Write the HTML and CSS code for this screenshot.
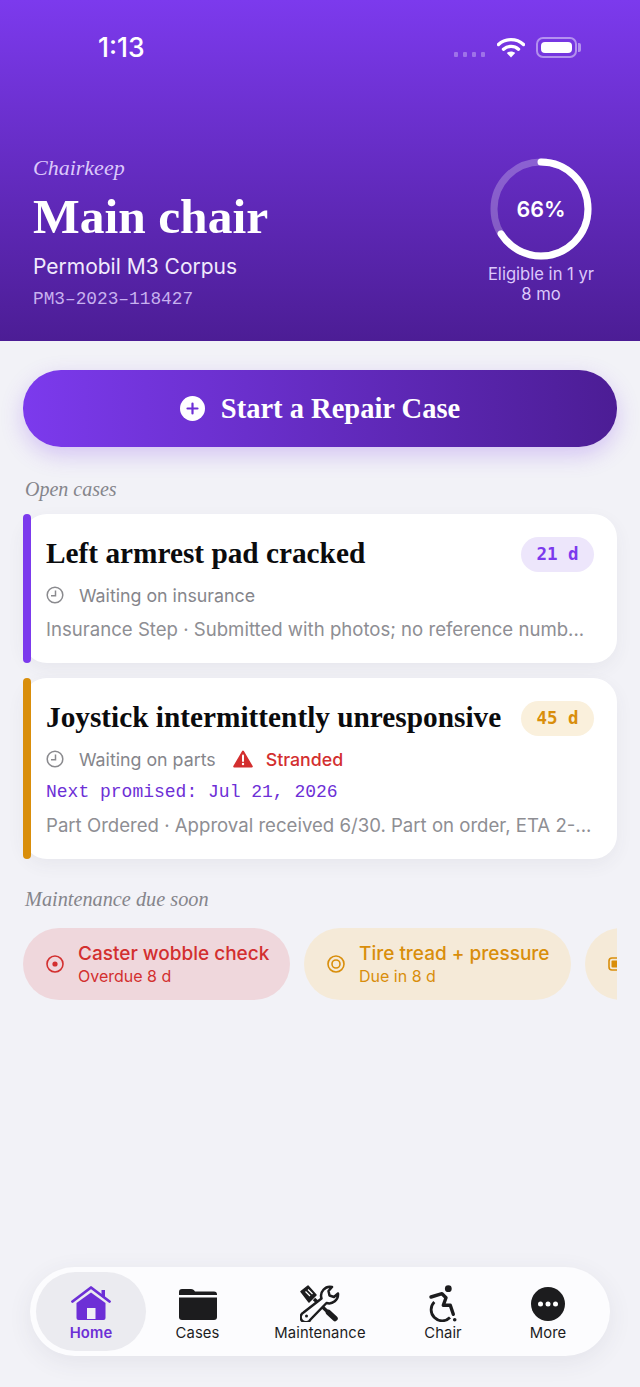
FILE: index.html
```html
<!doctype html>
<html>
<head>
<title>Chairkeep</title>
<meta charset="utf-8" />
<meta name="viewport" content="width=device-width, initial-scale=1" />
<link rel="stylesheet" href="styles.css">
</head>
<body>
<div class="app">

<header class="hero">
  <div class="status">
    <span class="time">1:13</span>
    <div class="status-icons">
      <span class="dots"><i></i><i></i><i></i><i></i></span>
      <svg class="wifi" width="28" height="21" viewBox="0 0 28 21">
        <path d="M1.5 7.5C8.5 1 19.500 1 26.500 7.500" fill="none" stroke="#fff" stroke-width="3.400" stroke-linecap="round"/>
        <path d="M6.500 12.200C10.800 8.400 17.200 8.400 21.500 12.200" fill="none" stroke="#fff" stroke-width="3.400" stroke-linecap="round"/>
        <path d="M14 20.500L9.800 16C12.200 14 15.800 14 18.200 16Z" fill="#fff"/>
      </svg>
      <span class="battery"><i></i></span>
    </div>
  </div>
  <div class="hero-body">
    <div class="hero-text">
      <div class="brand">Chairkeep</div>
      <h1>Main chair</h1>
      <div class="model">Permobil M3 Corpus</div>
      <div class="serial">PM3–2023–118427</div>
    </div>
    <div class="eligible">
      <div class="ring">
        <svg width="102" height="102" viewBox="0 0 102 102">
          <circle cx="51" cy="51" r="47" fill="none" stroke="#fff" stroke-opacity="0.25" stroke-width="7"/>
          <circle cx="51" cy="51" r="47" fill="none" stroke="#fff" stroke-width="7" stroke-linecap="round" stroke-dasharray="195 295.300" transform="rotate(-90 51 51)"/>
        </svg>
        <span class="pct">66%</span>
      </div>
      <div class="eligible-label">Eligible in 1 yr<br>8 mo</div>
    </div>
  </div>
</header>

<main class="content">
  <button class="repair" type="button">
    <svg width="25" height="25" viewBox="0 0 25 25">
      <circle cx="12.500" cy="12.500" r="12.500" fill="#fff"/>
      <path d="M12.500 7.500v10M7.500 12.500h10" stroke="#6d2fd6" stroke-width="2.200" stroke-linecap="round"/>
    </svg>
    Start a Repair Case
  </button>

  <h2 class="section first">Open cases</h2>

  <article class="case purple">
    <div class="case-top">
      <h3>Left armrest pad cracked</h3>
      <span class="days">21 d</span>
    </div>
    <div class="case-status">
      <svg class="clock" width="18" height="18" viewBox="0 0 18 18"><circle cx="9" cy="9" r="7.800" fill="none" stroke="#8a8a8e" stroke-width="1.500"/><path d="M9.500 4.500V9.800H5" fill="none" stroke="#8a8a8e" stroke-width="1.500"/></svg>
      <span>Waiting on insurance</span>
    </div>
    <p class="note">Insurance Step · Submitted with photos; no reference numb...</p>
  </article>

  <article class="case amber">
    <div class="case-top">
      <h3>Joystick intermittently unresponsive</h3>
      <span class="days">45 d</span>
    </div>
    <div class="case-status">
      <svg class="clock" width="18" height="18" viewBox="0 0 18 18"><circle cx="9" cy="9" r="7.800" fill="none" stroke="#8a8a8e" stroke-width="1.500"/><path d="M9.500 4.500V9.800H5" fill="none" stroke="#8a8a8e" stroke-width="1.500"/></svg>
      <span>Waiting on parts</span>
      <svg class="warn" width="20" height="18" viewBox="0 0 20 18"><path d="M10 1.500L18.800 16.500H1.200Z" fill="#d32f2f" stroke="#d32f2f" stroke-width="2" stroke-linejoin="round"/><path d="M10 5.500V11" stroke="#fff" stroke-width="2" stroke-linecap="round"/><circle cx="10" cy="14" r="1.200" fill="#fff"/></svg>
      <span class="stranded">Stranded</span>
    </div>
    <div class="promised">Next promised: Jul 21, 2026</div>
    <p class="note">Part Ordered · Approval received 6/30. Part on order, ETA 2-...</p>
  </article>

  <h2 class="section">Maintenance due soon</h2>

  <div class="chips">
    <div class="chip red">
      <svg width="18" height="18" viewBox="0 0 18 18"><circle cx="9" cy="9" r="8" fill="none" stroke="#d32f2f" stroke-width="1.600"/><circle cx="9" cy="9" r="2.600" fill="#d32f2f"/></svg>
      <div><div class="chip-title">Caster wobble check</div><div class="chip-sub">Overdue 8 d</div></div>
    </div>
    <div class="chip yellow">
      <svg width="18" height="18" viewBox="0 0 18 18"><circle cx="9" cy="9" r="8" fill="none" stroke="#d98e0b" stroke-width="1.600"/><circle cx="9" cy="9" r="4" fill="none" stroke="#d98e0b" stroke-width="1.600"/></svg>
      <div><div class="chip-title">Tire tread + pressure</div><div class="chip-sub">Due in 8 d</div></div>
    </div>
    <div class="chip yellow">
      <svg width="18" height="18" viewBox="0 0 18 18"><rect x="1" y="3" width="16" height="12" rx="3" fill="none" stroke="#d98e0b" stroke-width="1.600"/><rect x="3.500" y="5.500" width="11" height="7" rx="1" fill="#d98e0b"/></svg>
    </div>
  </div>
</main>

<nav class="tabs">
  <a class="tab active">
    <svg width="40" height="36" viewBox="0 0 40 36">
      <path d="M1.500 15.500L20 1.500 38.500 15.500" fill="none" stroke="#6d2fd6" stroke-width="2.800" stroke-linecap="round" stroke-linejoin="round"/>
      <path d="M30.500 4h3.500v9l-3.500-2.700Z" fill="#6d2fd6"/>
      <path d="M5.500 17L20 6.500 34.500 17V32a2 2 0 0 1-2 2H7.500a2 2 0 0 1-2-2Z" fill="#6d2fd6"/>
      <rect x="16" y="22" width="8.500" height="11" fill="#f0f0f5"/>
    </svg>
    <span>Home</span>
  </a>
  <a class="tab cases">
    <svg width="40" height="36" viewBox="0 0 40 36">
      <path d="M1 6a3 3 0 0 1 3-3h9c2 0 3 1 4 2.500h19a3 3 0 0 1 3 3V9H1Z" fill="#1c1c1e"/>
      <path d="M1 11.500h38V31a3 3 0 0 1-3 3H4a3 3 0 0 1-3-3Z" fill="#1c1c1e"/>
    </svg>
    <span>Cases</span>
  </a>
  <a class="tab maint">
    <svg width="40" height="37" viewBox="0 0 40 37">
      <path d="M1 6.500L8 1 16 10 9 17Z" fill="#1c1c1e" stroke="#1c1c1e" stroke-width="1.500" stroke-linejoin="round"/>
      <path d="M5.500 6.500L10 11M8 4.500L12.500 9" stroke="#fff" stroke-width="1.300"/>
      <path d="M14 14L30 29" stroke="#1c1c1e" stroke-width="3.400"/>
      <path d="M28.500 27.500L35 33.500" stroke="#1c1c1e" stroke-width="5.500" stroke-linecap="round"/>
      <path d="M32 2A9 9 0 0 0 21.500 13.500L3.500 27.500A5.200 5.200 0 1 0 10.500 34.500L26.500 18A9 9 0 0 0 38 8.500L34 12 29.500 10.500 28.500 6Z" fill="#fcfcfe" stroke="#1c1c1e" stroke-width="2.500" stroke-linejoin="round"/>
      <circle cx="6.500" cy="31" r="1.500" fill="#1c1c1e"/>
    </svg>
    <span>Maintenance</span>
  </a>
  <a class="tab chair">
    <svg width="40" height="37" viewBox="0 0 40 37">
      <circle cx="25.300" cy="3.700" r="3.400" fill="#1c1c1e"/>
      <path d="M8 12L19 8.700 23 12.700 20.300 20.300H27.300L30.300 29.300" fill="none" stroke="#1c1c1e" stroke-width="3.400" stroke-linejoin="round" stroke-linecap="round"/>
      <path d="M11.300 17A10.500 10.500 0 1 0 27 32.500" fill="none" stroke="#1c1c1e" stroke-width="2.800"/>
      <circle cx="31.700" cy="34.700" r="1.800" fill="#1c1c1e"/>
    </svg>
    <span>Chair</span>
  </a>
  <a class="tab more">
    <svg width="40" height="36" viewBox="0 0 40 36">
      <circle cx="20" cy="18" r="17" fill="#1c1c1e"/>
      <circle cx="12.500" cy="18" r="2.500" fill="#fff"/><circle cx="20" cy="18" r="2.500" fill="#fff"/><circle cx="27.500" cy="18" r="2.500" fill="#fff"/>
    </svg>
    <span>More</span>
  </a>
</nav>

</div>
</body>
</html>
```

FILE: styles.css
```css
* {
box-sizing: border-box;
}
body {
margin: 0;
background-color: #f2f2f7;
font-family: Inter, "Liberation Sans", sans-serif;
}
.app {
width: 640px;
height: 1387px;
overflow: hidden;
display: flex;
flex-direction: column;
}

/* header */
.hero {
height: 341px;
padding: 0 33px;
color: #fff;
background: linear-gradient(180deg, #7c3aed 0%, #4c1d95 100%);
}
.status {
height: 95px;
padding: 28px 26px 0 65px;
display: flex;
justify-content: space-between;
}
.time {
font-size: 26.500px;
font-weight: 500;
line-height: 38px;
}
.status-icons {
display: flex;
align-items: center;
height: 38px;
}
.dots {
display: flex;
gap: 5px;
margin: 14px 12px 0 0;
}
.dots i {
width: 4px;
height: 5px;
border-radius: 1px;
background-color: rgba(255,255,255,0.3);
}
.wifi {
margin-right: 11px;
}
.battery {
width: 41px;
height: 21px;
margin-right: 4px;
padding: 3px;
border: 2px solid rgba(255,255,255,0.45);
border-radius: 7px;
position: relative;
}
.battery i {
display: block;
width: 100%;
height: 100%;
border-radius: 4px;
background-color: #fff;
}
.battery::after {
content: "";
position: absolute;
right: -6px;
top: 4px;
width: 3px;
height: 9px;
border-radius: 0 2px 2px 0;
background-color: rgba(255,255,255,0.45);
}
.hero-body {
display: flex;
justify-content: space-between;
align-items: flex-start;
padding-top: 59px;
}
.brand {
font-family: "Liberation Serif", serif;
font-style: italic;
font-size: 22px;
line-height: 28px;
color: #dcc8fb;
}
h1 {
margin: 4px 0 0;
font-family: "Liberation Serif", serif;
font-weight: 700;
font-size: 49.500px;
line-height: 62px;
}
.model {
margin-top: 5px;
font-size: 21px;
line-height: 28px;
color: #f1eafd;
}
.serial {
margin-top: 6px;
font-family: "Liberation Mono", monospace;
font-size: 17.800px;
line-height: 24px;
color: #c7b1ef;
}
.eligible {
width: 120px;
margin: 4px 6px 0 0;
text-align: center;
display: flex;
flex-direction: column;
align-items: center;
}
.ring {
position: relative;
width: 102px;
height: 102px;
}
.ring svg {
display: block;
}
.pct {
position: absolute;
inset: 0;
display: flex;
align-items: center;
justify-content: center;
font-size: 21.500px;
font-weight: 600;
}
.eligible-label {
margin-top: 4px;
font-size: 16.600px;
line-height: 20px;
white-space: nowrap;
color: #dcc8fb;
}

/* main column */
.content {
flex: 1;
padding: 29px 23px 0;
min-height: 0;
}
.repair {
width: 594px;
height: 77px;
border: 0;
border-radius: 38px;
display: flex;
align-items: center;
justify-content: center;
gap: 16px;
color: #fff;
font-family: "Liberation Serif", serif;
font-weight: 700;
font-size: 28.500px;
background: linear-gradient(90deg, #7c3aed 0%, #4c1d95 100%);
box-shadow: 0 8px 22px rgba(124,58,237,0.25);
}
.section {
margin: 28px 0 13px 2px;
font-family: "Liberation Serif", serif;
font-style: italic;
font-weight: 400;
font-size: 20.300px;
line-height: 24px;
color: #85858b;
}
.section.first {
margin-top: 30px;
font-size: 20px;
}
.case {
position: relative;
margin-bottom: 15px;
padding: 22px 23px 20px 23px;
background-color: #fff;
border-radius: 24px;
box-shadow: 0 6px 18px rgba(60,60,90,0.06);
}
.case::before {
content: "";
position: absolute;
left: 0;
top: 0;
bottom: 0;
width: 8px;
border-radius: 4px;
}
.case.purple::before {
background-color: #7c3aed;
}
.case.amber::before {
background-color: #d98e0b;
}
.case-top {
display: flex;
justify-content: space-between;
align-items: center;
min-height: 36px;
}
h3 {
margin: 0;
padding-bottom: 3px;
font-family: "Liberation Serif", serif;
font-weight: 700;
font-size: 29.300px;
line-height: 32px;
color: #0b0b0d;
white-space: nowrap;
}
.days {
flex: none;
width: 73px;
height: 35px;
border-radius: 18px;
text-align: center;
font-family: "DejaVu Sans Mono", monospace;
font-weight: 700;
font-size: 17.500px;
line-height: 35px;
white-space: pre;
}
.purple .days {
background-color: #ede6fb;
color: #7c3aed;
}
.amber .days {
background-color: #faf0dc;
color: #d98e0b;
}
.case-status {
margin-top: 9px;
display: flex;
align-items: center;
height: 28px;
font-size: 17.800px;
color: #85858b;
}
.clock {
margin-right: 15px;
}
.warn {
margin: 0 13px 0 17px;
}
.stranded {
color: #d32f2f;
font-weight: 500;
}
.promised {
margin-top: 5px;
font-family: "Liberation Mono", monospace;
font-size: 18px;
line-height: 28px;
color: #6d2fd6;
}
.note {
margin: 6px 0 0;
font-size: 18.600px;
line-height: 28px;
color: #8e8e93;
white-space: nowrap;
}
.promised + .note {
margin-top: 5px;
}

/* maintenance chips */
.chips {
display: flex;
gap: 14px;
overflow: hidden;
margin-top: 17px;
}
.chip {
flex: 0 0 267px;
height: 72px;
padding: 0 20px 0 23px;
border-radius: 36px;
display: flex;
align-items: center;
gap: 14px;
}
.chip.red {
background-color: #efd7dc;
color: #d32f2f;
}
.chip.yellow {
background-color: #f5ead8;
color: #d98e0b;
}
.chip-title {
font-size: 19px;
font-weight: 500;
line-height: 24px;
white-space: nowrap;
}
.chip-sub {
font-size: 16px;
line-height: 20px;
}

/* tab bar */
.tabs {
flex: none;
width: 580px;
height: 89px;
margin: 0 30px 31px;
padding: 5px 6px;
display: flex;
background-color: #fcfcfe;
border-radius: 45px;
box-shadow: 0 6px 24px rgba(60,60,90,0.08);
}
.tab {
flex: 1 1 0;
display: flex;
flex-direction: column;
align-items: center;
justify-content: flex-end;
padding-bottom: 9px;
font-size: 14.800px;
font-weight: 400;
letter-spacing: 0.1px;
color: #1c1c1e;
}
.tab svg {
margin-bottom: 2px;
}
.tab.active {
flex: 0 0 110px;
border-radius: 40px;
background-color: #ebebf0;
color: #6d2fd6;
font-weight: 600;
}
.tab.cases {
flex: 0 0 103px;
}
.tab.maint {
flex: 0 0 142px;
}
.tab.chair {
flex: 0 0 104px;
}
.tab.more {
flex: 0 0 106px;
}
```
